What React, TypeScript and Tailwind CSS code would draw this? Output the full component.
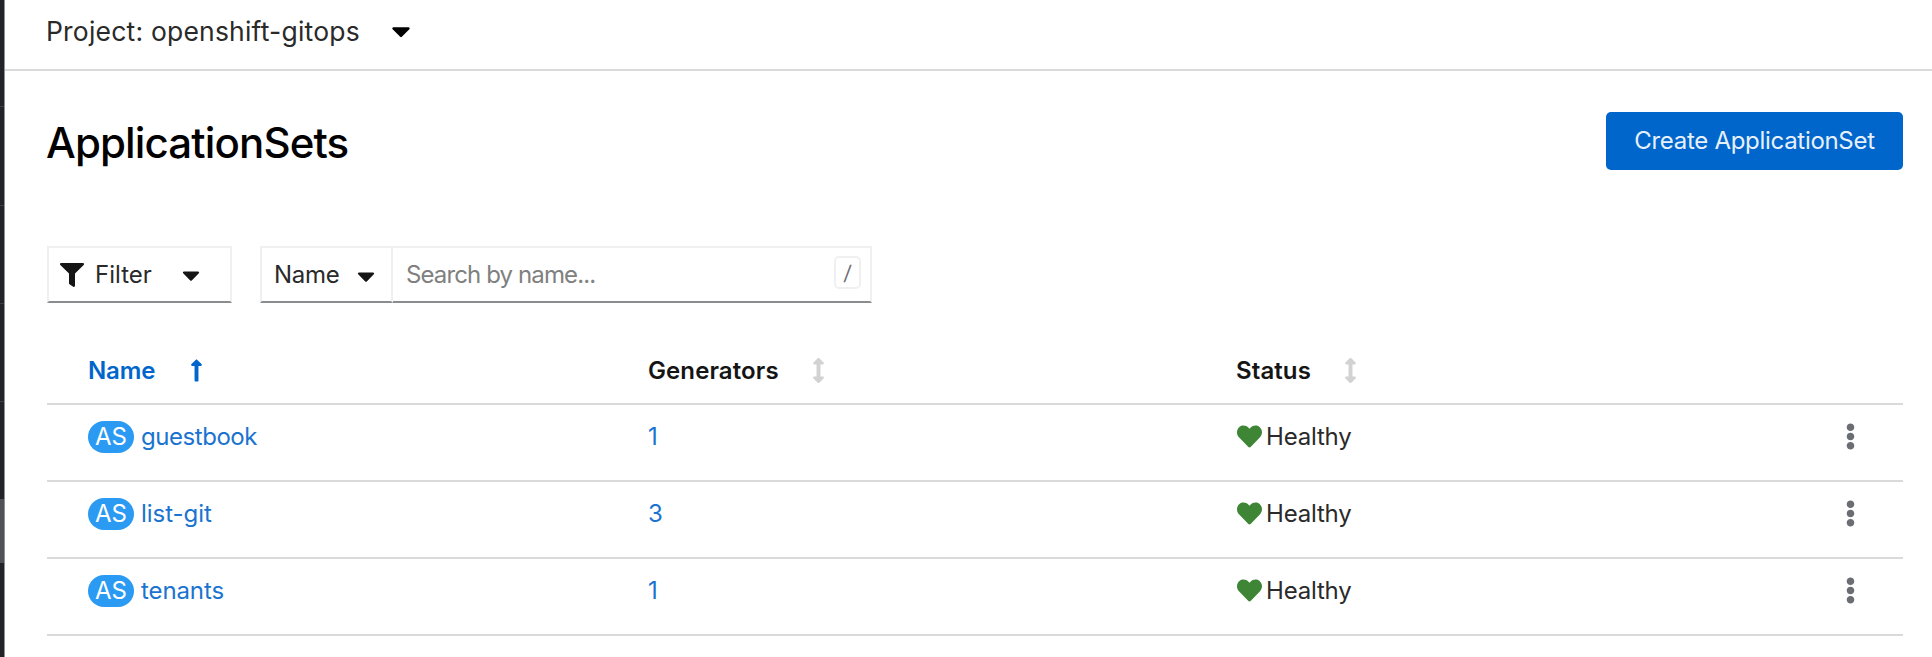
import React from 'react';
import { FaArrowsAltV, FaCaretDown, FaEllipsisV, FaFilter, FaHeart, FaLongArrowAltUp } from 'react-icons/fa';

const rows = [
  { name: 'guestbook', generators: 1, spacing: 'tracking-[-0.45px]' },
  { name: 'list-git', generators: 3, spacing: 'tracking-[-0.05px]' },
  { name: 'tenants', generators: 1, spacing: 'tracking-[-0.1px]' },
];

const columns = 'grid grid-cols-[561px_588px_1fr_106px] pl-[41px]';

function Sidebar() {
  return (
    <div className="flex w-[5px] shrink-0 flex-col border-r border-[#8f9193] bg-[#212427]">
      <div className="h-[107px] border-b border-[#3c3f42]" />
      <div className="h-[99px] border-b border-[#3c3f42]" />
      <div className="h-[98px] border-b border-[#3c3f42]" />
      <div className="h-[98px] border-b border-[#3c3f42]" />
      <div className="h-[97px]" />
      <div className="h-[64px] bg-[#4f5255]" />
    </div>
  );
}

function TableHead() {
  return (
    <div className={`${columns} h-[77px] items-center border-b-2 border-[#dadada] pt-[10px] font-semibold`}>
      <div className="flex items-center text-[#0066cc]">
        <span className="w-[96px] tracking-[-0.1px]">Name</span>
        <FaLongArrowAltUp className="h-[25px] w-[25px]" />
      </div>
      <div className="-ml-px flex items-center">
        <span className="w-[158px] tracking-[0.1px]">Generators</span>
        <FaArrowsAltV className="h-[25px] w-[25px] text-[#d2d2d2]" />
      </div>
      <div className="-ml-px flex items-center">
        <span className="w-[102px] tracking-[0.1px]">Status</span>
        <FaArrowsAltV className="h-[25px] w-[25px] text-[#d2d2d2]" />
      </div>
    </div>
  );
}

export default function App() {
  return (
    <div className="flex h-[657px] w-[1932px] overflow-hidden bg-white font-['Inter',sans-serif] text-[24px] leading-[36px] text-[#151515]">
      <Sidebar />
      <div className="flex flex-1 flex-col">
        <div className="flex h-[71px] items-center border-b-2 border-[#dadada] pb-[7px] pl-[41px]">
          <span className="w-[339px] text-[26.5px] tracking-[0.2px] text-[#2a2a2a]">Project: openshift-gitops</span>
          <FaCaretDown className="h-[30px] w-[32px] text-black" />
        </div>

        <div className="flex flex-col pl-[42px] pr-[29px]">
          <div className="flex h-[175px] items-start justify-between pt-[41px]">
            <h1 className="-ml-px pt-px text-[42px] leading-[60px] font-medium tracking-[-0.86px] text-black">ApplicationSets</h1>
            <button className="h-[58px] w-[297px] rounded-[5px] bg-[#0066cc] tracking-[-0.3px] text-[#e8f0fa]">
              Create ApplicationSet
            </button>
          </div>

          <div className="flex h-[57px] gap-[28px]">
            <div className="flex w-[185px] items-center border-2 border-[#f0f0f0] border-b-[#8a8d90] pl-[11px]">
              <FaFilter className="h-[24px] w-[24px]" />
              <span className="ml-[11px] w-[82px] text-[#2a2a2a]">Filter</span>
              <FaCaretDown className="h-[28px] w-[28px]" />
            </div>
            <div className="flex">
              <div className="flex w-[133px] items-center border-2 border-[#f0f0f0] border-b-[#8a8d90] pl-[12px]">
                <span className="w-[78px] tracking-[-0.3px] text-[#2a2a2a]">Name</span>
                <FaCaretDown className="mt-[3px] h-[28px] w-[28px]" />
              </div>
              <div className="flex w-[479px] items-center justify-between border-2 border-l-0 border-[#f0f0f0] border-b-[#8a8d90] pl-[13px] pr-[9px]">
                <span className="tracking-[-0.88px] text-[#808080]">Search by name...</span>
                <kbd className="mb-[4px] flex h-[33px] w-[27px] items-center justify-center rounded-[5px] border-2 border-[#f0f0f0] font-['Inter',sans-serif] text-[20px] text-[#6a6e73]">
                  <span className="-skew-x-6">/</span>
                </kbd>
              </div>
            </div>
          </div>

          <div className="mt-[25px] flex flex-col">
            <TableHead />
            {rows.map((row) => (
              <div key={row.name} className={`${columns} h-[77px] items-center border-b-2 border-[#dadada] pb-[12px]`}>
                <div className="flex items-center gap-[7px] text-[#1a73cf]">
                  <span className="flex h-[32px] w-[46px] items-center justify-center rounded-full bg-[#2b9af3] text-white">AS</span>
                  <span className={row.spacing}>{row.name}</span>
                </div>
                <div className="-ml-px text-[#1a73cf]">{row.generators}</div>
                <div className="flex items-center gap-[4px]">
                  <FaHeart className="h-[25px] w-[25px] text-[#3e8635]" />
                  <span className="tracking-[-0.2px] text-[#2a2a2a]">Healthy</span>
                </div>
                <div className="flex justify-center">
                  <FaEllipsisV className="h-[27px] w-[27px] text-[#6a6e73]" />
                </div>
              </div>
            ))}
          </div>
        </div>
      </div>
    </div>
  );
}
